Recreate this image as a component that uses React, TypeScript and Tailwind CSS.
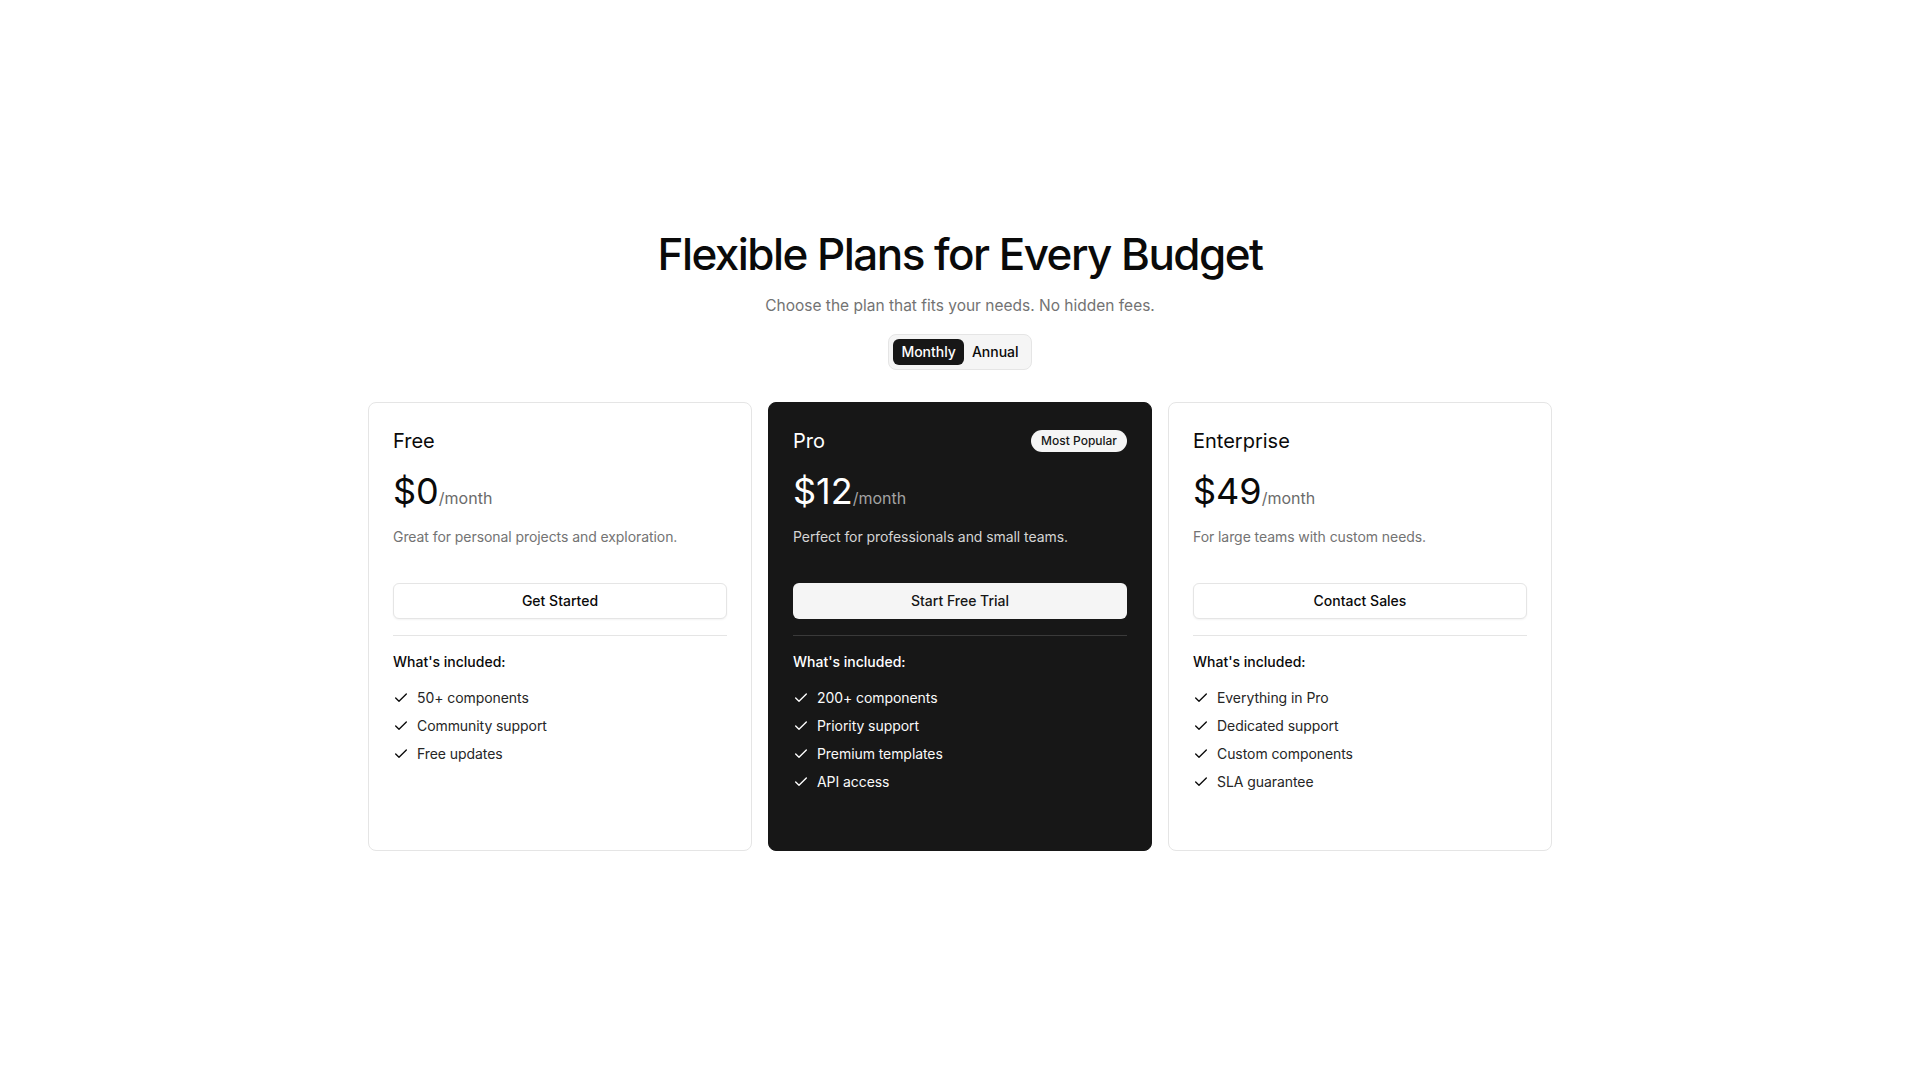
import { Check } from "lucide-react";

type Plan = {
  name: string;
  price: string;
  blurb: string;
  cta: string;
  features: string[];
  featured?: boolean;
};

const plans: Plan[] = [
  {
    name: "Free",
    price: "$0",
    blurb: "Great for personal projects and exploration.",
    cta: "Get Started",
    features: ["50+ components", "Community support", "Free updates"],
  },
  {
    name: "Pro",
    price: "$12",
    blurb: "Perfect for professionals and small teams.",
    cta: "Start Free Trial",
    features: ["200+ components", "Priority support", "Premium templates", "API access"],
    featured: true,
  },
  {
    name: "Enterprise",
    price: "$49",
    blurb: "For large teams with custom needs.",
    cta: "Contact Sales",
    features: ["Everything in Pro", "Dedicated support", "Custom components", "SLA guarantee"],
  },
];

const PlanCard = ({ plan }: { plan: Plan }) => {
  const dark = plan.featured;
  return (
    <div
      className={
        dark
          ? "rounded-lg border border-[#171717] bg-[#171717] p-6 pb-[58px] text-white"
          : "rounded-lg border border-[#e5e5e5] bg-white p-6 pb-[58px] text-[#0a0a0a]"
      }
    >
      <div className="flex items-center justify-between">
        <h3 className="text-xl font-normal leading-7">{plan.name}</h3>
        {dark && (
          <span className="rounded-full bg-[#f5f5f5] px-2.5 py-[3px] text-xs font-medium text-[#171717]">
            Most Popular
          </span>
        )}
      </div>
      <div className="mt-4 flex items-baseline">
        <span className="text-4xl leading-10">{plan.price}</span>
        <span className={dark ? "text-base text-[#a3a3a3]" : "text-base text-[#6b6b6b]"}>/month</span>
      </div>
      <p
        className={
          dark
            ? "mt-4 min-h-10 text-sm tracking-[-0.005em] text-[#d4d4d4]"
            : "mt-4 min-h-10 text-sm tracking-[-0.005em] text-[#737373]"
        }
      >
        {plan.blurb}
      </p>
      <button
        className={
          dark
            ? "mt-4 h-9 w-full rounded-md bg-[#f5f5f5] text-sm font-medium text-[#171717]"
            : "mt-4 h-9 w-full rounded-md border border-[#e5e5e5] bg-white text-sm font-medium text-[#0a0a0a] shadow-xs"
        }
      >
        {plan.cta}
      </button>
      <div className={dark ? "mt-4 h-px bg-[#3a3a3a]" : "mt-4 h-px bg-[#e5e5e5]"}></div>
      <p className="mt-4 text-sm font-medium">What's included:</p>
      <ul className="mt-4 flex flex-col gap-2">
        {plan.features.map((f) => (
          <li key={f} className="flex items-center gap-2 text-sm tracking-[-0.005em]">
            <Check size={16} strokeWidth={2} className="shrink-0" />
            <span className={dark ? "text-[#fafafa]" : "text-[#262626]"}>{f}</span>
          </li>
        ))}
      </ul>
    </div>
  );
};

export default function App() {
  return (
    <div className="flex min-h-screen items-center justify-center bg-white font-['Inter',sans-serif] text-[#0a0a0a]">
      <div className="flex w-[1184px] flex-col items-center">
        <h1 className="text-[44px] font-medium leading-[48px] tracking-[-0.035em] text-[#0a0a0a]">
          Flexible Plans for Every Budget
        </h1>
        <p className="mt-4 text-[15.5px] leading-6 text-[#737373]">
          Choose the plan that fits your needs. No hidden fees.
        </p>
        <div className="mt-4 flex rounded-lg border border-[#e5e5e5] bg-[#f5f5f5] p-1">
          <button className="rounded-md bg-[#171717] px-2 py-[3px] text-sm font-medium text-white">
            Monthly
          </button>
          <button className="rounded-md px-2 py-[3px] text-sm font-medium text-[#0a0a0a]">
            Annual
          </button>
        </div>
        <div className="mt-8 grid w-full grid-cols-3 gap-4">
          {plans.map((p) => (
            <PlanCard key={p.name} plan={p} />
          ))}
        </div>
      </div>
    </div>
  );
}
